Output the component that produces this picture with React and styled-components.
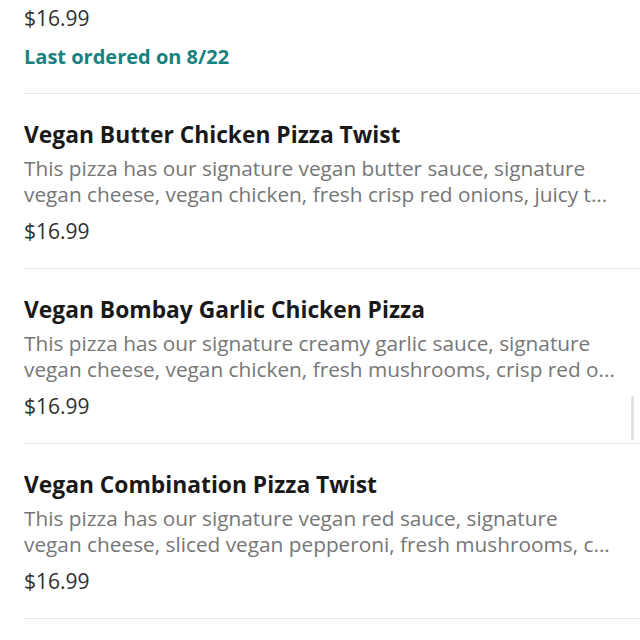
import React from "react";
import styled, { createGlobalStyle } from "styled-components";

const Global = createGlobalStyle`
  html, body { margin: 0; padding: 0; background: #ffffff; }
  body { font-family: "Open Sans", "Noto Sans", sans-serif; -webkit-font-smoothing: antialiased; }
`;

const Screen = styled.div`
  position: relative;
  width: 640px;
  height: 640px;
  overflow: hidden;
  background: #ffffff;
`;

const List = styled.ul`
  list-style: none;
  margin: 0;
  padding: 0 0 0 24px;
`;

const Item = styled.li`
  display: flex;
  flex-direction: column;
  padding: ${(p) => (p.$partial ? "5px 0 23px" : "27px 0 24px")};
  border-bottom: 1px solid #e7e7e7;
`;

const Title = styled.div`
  font-size: 22.8px;
  line-height: 28px;
  font-weight: 700;
  color: #191919;
  white-space: nowrap;
`;

const Desc = styled.div`
  margin-top: 6px;
  padding-right: 10px;
  font-size: 20.8px;
  line-height: 26px;
  color: #767676;
`;

const DescLine = styled.div`
  white-space: nowrap;
  overflow: hidden;
  text-overflow: ellipsis;
`;

const Price = styled.div`
  margin-top: ${(p) => (p.$first ? "0" : "11px")};
  font-size: 21px;
  line-height: 26px;
  color: #2f2f2f;
`;

const LastOrdered = styled.div`
  margin-top: 13px;
  font-size: 20px;
  line-height: 26px;
  font-weight: 700;
  color: #18817f;
`;

const ScrollThumb = styled.div`
  position: absolute;
  right: 6px;
  top: 396px;
  width: 3px;
  height: 44px;
  border-radius: 2px;
  background: #e2e2e2;
`;

const items = [
  {
    title: "Vegan Butter Chicken Pizza Twist",
    lines: [
      "This pizza has our signature vegan butter sauce, signature",
      "vegan cheese, vegan chicken, fresh crisp red onions, juicy t...",
    ],
  },
  {
    title: "Vegan Bombay Garlic Chicken Pizza",
    lines: [
      "This pizza has our signature creamy garlic sauce, signature",
      "vegan cheese, vegan chicken, fresh mushrooms, crisp red o...",
    ],
  },
  {
    title: "Vegan Combination Pizza Twist",
    lines: [
      "This pizza has our signature vegan red sauce, signature",
      "vegan cheese, sliced vegan pepperoni, fresh mushrooms, c...",
    ],
  },
];

export default function App() {
  return (
    <Screen>
      <Global />
      <List>
        <Item $partial>
          <Price $first>$16.99</Price>
          <LastOrdered>Last ordered on 8/22</LastOrdered>
        </Item>
        {items.map((it) => (
          <Item key={it.title}>
            <Title>{it.title}</Title>
            <Desc>
              {it.lines.map((l, i) => (
                <DescLine key={i}>{l}</DescLine>
              ))}
            </Desc>
            <Price>$16.99</Price>
          </Item>
        ))}
      </List>
      <ScrollThumb />
    </Screen>
  );
}
